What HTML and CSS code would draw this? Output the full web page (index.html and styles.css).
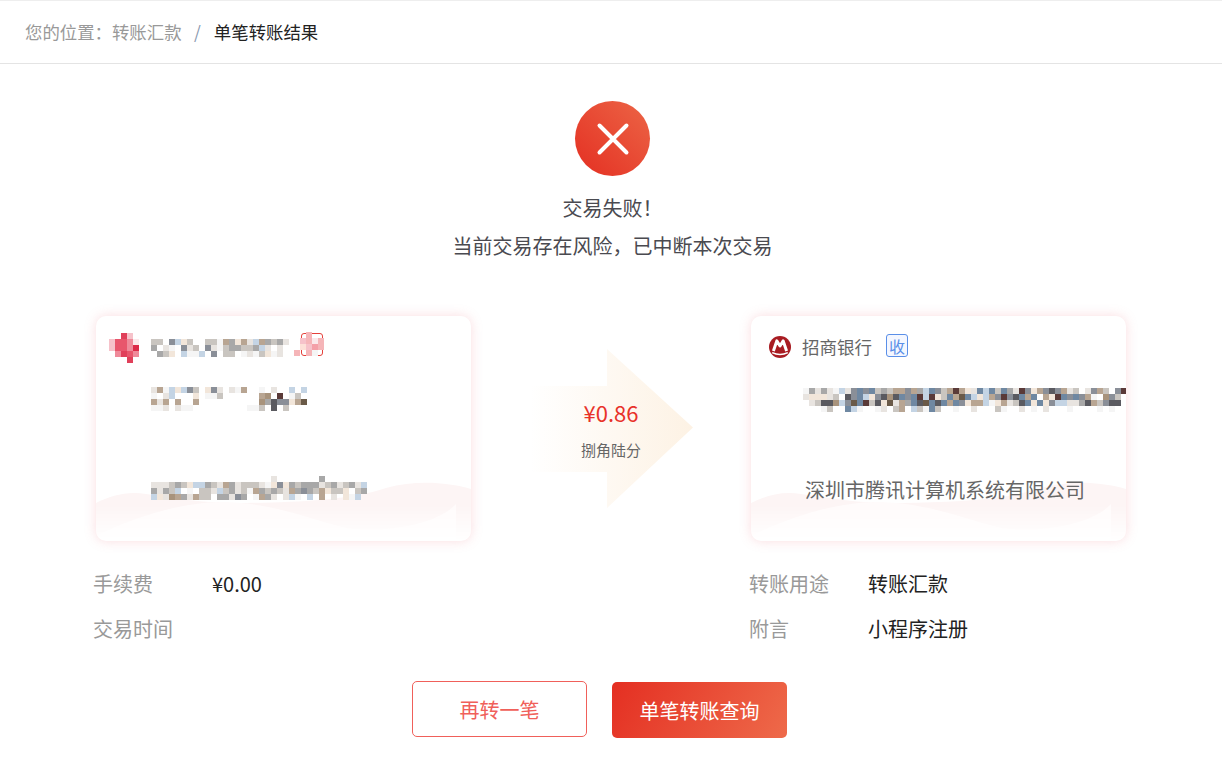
FILE: index.html
```html
<!DOCTYPE html>
<html lang="zh-CN">
<head>
    <meta charset="UTF-8">
    <meta name="viewport" content="width=device-width, initial-scale=1.0">
    <title>单笔转账结果</title>
    <link rel="stylesheet" href="styles.css">
</head>
<body>
    <div class="breadcrumb">
        <span class="crumb-link">您的位置&#xFF1A;转账汇款</span>
        <span class="crumb-sep">/</span>
        <span class="crumb-now">单笔转账结果</span>
    </div>

    <div class="result">
        <div class="result-icon">
            <svg width="34" height="34" viewBox="0 0 34 34">
                <path d="M3.5 3.5 L30.5 30.5 M30.5 3.5 L3.5 30.5" stroke="#fff" stroke-width="4" stroke-linecap="round" fill="none"/>
            </svg>
        </div>
        <p class="result-text">交易失败&#xFF01;</p>
        <p class="result-text">当前交易存在风险&#xFF0C;已中断本次交易</p>
    </div>

    <div class="transfer">
        <div class="card">
            <svg class="card-wave" viewBox="0 0 375 65" preserveAspectRatio="none">
                <path d="M0 27 C15 20 30 15 50 18 C80 22 110 28 150 27 C200 26 250 25 290 12 C320 4 350 6 375 13 L375 65 L0 65 Z" fill="#fdf5f5"/>
                <path d="M0 60 C40 40 90 25 130 26 C180 28 210 42 250 52 C300 58 345 45 360 28 L360 65 L0 65 Z" fill="#fffbfb"/>
            </svg>
            <div class="card-head">
                <canvas class="mosaic mosaic-logo" data-rows="..rs. sttuw sttuv .urtu ...r."></canvas>
                <canvas class="mosaic mosaic-name" data-rows="bb.dfgb..bbihcghafhcbca c.ai.dab.daibccbbcfa.a. .cbg.fiif.d.bb.iaibgia."></canvas>
                <span class="tag tag-pay"><canvas class="mosaic mosaic-tag" data-rows="..x.. .sxwx .yszx x.xi."></canvas></span>
            </div>
            <canvas class="mosaic mosaic-account" data-rows="ahifgfdb.gda.aih..i.a..f.f i.af...g.iib......ho.k.ib. hah.h..h..........oceddghl iia.aii.........iib.e.b..."></canvas>
            <canvas class="mosaic mosaic-owner" data-rows="....................a.......c....... aaabcbgffcbahcabbbaigdgcbcccabcabcaf cacbf.i.bbafbcabihcbcbahcdcbhgbbg.bc fgaohcahbb.ccadc.ihca.afi.f.h.a.gif."></canvas>
        </div>

        <div class="amount">
            <div class="amount-arrow"></div>
            <div class="amount-num">¥0.86</div>
            <div class="amount-cn">捌角陆分</div>
        </div>

        <div class="card">
            <svg class="card-wave" viewBox="0 0 375 65" preserveAspectRatio="none">
                <path d="M0 27 C15 20 30 15 50 18 C80 22 110 28 150 27 C200 26 250 25 290 12 C320 4 350 6 375 13 L375 65 L0 65 Z" fill="#fdf5f5"/>
                <path d="M0 60 C40 40 90 25 130 26 C180 28 210 42 250 52 C300 58 345 45 360 28 L360 65 L0 65 Z" fill="#fffbfb"/>
            </svg>
            <div class="card-head card-head-bank">
                <svg class="bank-logo" width="22" height="22" viewBox="0 0 22 22">
                    <circle cx="11" cy="11" r="11" fill="#a81c22"/>
                    <path d="M4.4 15 L7.8 4.9 L11 10 L14.2 4.9 L17.6 15" stroke="#fff" stroke-width="3" stroke-linejoin="round" fill="none"/>
                    <path d="M3.2 16.6 Q11 20.4 18.8 16.6" stroke="#fff" stroke-width="1.6" fill="none"/>
                </svg>
                <span class="bank-name">招商银行</span>
                <span class="tag tag-get">收</span>
            </div>
            <canvas class="mosaic mosaic-card-no" data-rows="icacaifadjdjbcbhhdhcfjdbhkhgajfjbjcakdghdedhab.adhb.dk agggab.edjfgdeoejdjkfkgbjhljfgfhdkdejhj.hgkjdjdhi.odb.eg .abeeofdljkbeglahcjeljejhjdghhfighabejgjgdffaacehbdee ...ib..jfi..ia.bh.fbijb..i..a...bi..a.i.a...i....i.i."></canvas>
            <div class="card-owner">深圳市腾讯计算机系统有限公司</div>
        </div>
    </div>

    <div class="details">
        <div>
            <div class="detail-row"><span class="detail-label">手续费</span><span class="detail-value">¥0.00</span></div>
            <div class="detail-row"><span class="detail-label">交易时间</span></div>
        </div>
        <div>
            <div class="detail-row"><span class="detail-label">转账用途</span><span class="detail-value">转账汇款</span></div>
            <div class="detail-row"><span class="detail-label">附言</span><span class="detail-value">小程序注册</span></div>
        </div>
    </div>

    <div class="actions">
        <button class="btn btn-outline">再转一笔</button>
        <button class="btn btn-fill">单笔转账查询</button>
    </div>

    <script src="script.js"></script>
</body>
</html>
```

FILE: styles.css
```css
* {
    margin: 0;
    padding: 0;
    box-sizing: border-box;
    font-family: "Noto Sans CJK SC", "Noto Sans", sans-serif;
}

body {
    background: #fff;
    color: #222;
}

.breadcrumb {
    display: flex;
    align-items: center;
    height: 64px;
    padding: 0 0 2px 25px;
    border-top: 1px solid #eee;
    border-bottom: 1px solid #e4e4e4;
    font-size: 17.4px;
}

.crumb-link {
    color: #999;
}

.crumb-sep {
    margin: 0 13px 0 12.5px;
    color: #8a9ab0;
}

.crumb-now {
    color: #222;
}

.result {
    display: flex;
    flex-direction: column;
    align-items: center;
    padding: 37px 0 0 3px;
}

.result-icon {
    display: flex;
    align-items: center;
    justify-content: center;
    width: 75px;
    height: 75px;
    margin-bottom: 13px;
    border-radius: 50%;
    background: linear-gradient(45deg, #e42f22, #ec6546);
}

.result-text {
    font-size: 20px;
    line-height: 38px;
    color: #4a4a50;
}

.transfer {
    display: flex;
    justify-content: space-between;
    margin-top: 51px;
    padding: 0 96px;
}

.card {
    position: relative;
    display: flex;
    flex-direction: column;
    align-items: flex-start;
    width: 375px;
    height: 225px;
    overflow: hidden;
    background: #fff;
    border-radius: 10px;
    box-shadow: 0 0 12px rgba(240, 120, 130, 0.25);
}

.card-wave {
    position: absolute;
    left: 0;
    bottom: 0;
    width: 100%;
    height: 65px;
    mask-image: linear-gradient(#000 45%, transparent 100%);
}

.card-head {
    position: relative;
    display: flex;
    align-items: flex-start;
    height: 47px;
    padding: 17px 0 0 13px;
}

.card-head-bank {
    align-items: center;
    padding: 18px 0 0 18px;
    height: 44px;
    font-size: 17.5px;
}

.mosaic {
    display: block;
    position: relative;
    flex-shrink: 0;
}

.mosaic-name {
    margin: 6px 0 0 12px;
}

.tag {
    display: flex;
    align-items: center;
    justify-content: center;
    position: relative;
    width: 22px;
    height: 23px;
    border-radius: 3px;
}

.tag-pay {
    margin-left: 12px;
    border: 1px solid #e5403a;
}

.mosaic-tag {
    position: absolute;
    left: -8px;
    top: -2px;
}

.bank-logo {
    flex-shrink: 0;
}

.bank-name {
    margin: 0 0 2px 11px;
    color: #666;
}

.tag-get {
    margin: 0 0 3px 14px;
    border: 1px solid #5a8fe8;
    background: #f4f7ff;
    color: #5a8fe8;
    font-size: 16px;
}

.mosaic-account {
    margin: 24px 0 0 55px;
}

.mosaic-owner {
    margin: 65px 0 0 55px;
}

.mosaic-card-no {
    margin: 28px 0 0 52px;
}

.card-owner {
    position: relative;
    margin: 63px 0 0 54px;
    font-size: 20px;
    line-height: 30px;
    color: #666;
}

.amount {
    position: relative;
    display: flex;
    flex-direction: column;
    align-items: center;
    width: 280px;
    padding-top: 78px;
}

.amount-arrow {
    position: absolute;
    left: 59px;
    top: 33px;
    width: 163px;
    height: 159px;
    background: linear-gradient(90deg, rgba(253, 243, 230, 0), #fdf2e4);
    clip-path: polygon(0 37px, 77px 37px, 77px 0, 100% 78.5px, 77px 100%, 77px 123px, 0 123px);
}

.amount-num {
    position: relative;
    font-size: 22px;
    line-height: 36px;
    color: #e8322a;
}

.amount-cn {
    position: relative;
    margin-top: 9px;
    font-size: 15px;
    line-height: 22px;
    color: #666;
}

.details {
    display: grid;
    grid-template-columns: 656px 1fr;
    margin-top: 20px;
    padding-left: 93px;
}

.detail-row {
    display: flex;
    align-items: center;
    height: 45px;
    font-size: 20px;
}

.detail-label {
    width: 119px;
    color: #999;
}

.detail-value {
    color: #222;
}

.actions {
    display: flex;
    justify-content: center;
    gap: 25px;
    margin-top: 30px;
    padding-right: 23px;
}

.btn {
    width: 175px;
    height: 56px;
    border-radius: 5px;
    font-size: 20px;
    cursor: pointer;
}

.btn-outline {
    background: #fff;
    border: 1px solid #f0605a;
    color: #f0605a;
}

.btn-fill {
    margin-top: 1px;
    border: none;
    background: linear-gradient(120deg, #e42f22, #ee6a4a);
    color: #fff;
}
```

FILE: script.js
```js
// redacted blocks on the cards: each letter is one 6px square
const palette = {
    a: '#e8e4e0', b: '#c9c5c0', c: '#a8a8a8', d: '#8a8f98', e: '#5a5a60', f: '#c4d4e4',
    g: '#f2e6da', h: '#b8a592', i: '#f5f5f5', j: '#6f88a2', k: '#5a3a38', l: '#6a5a48',
    o: '#a8937c', r: '#e0405a', s: '#f6c2ca', t: '#e8566c', u: '#ef8a9a', v: '#dc2a48',
    w: '#fbe8ea', x: '#f5b5b8', y: '#fde0d8', z: '#f4a0a8'
};

document.querySelectorAll('.mosaic').forEach(canvas => {
    const rows = canvas.dataset.rows.split(' ');
    canvas.width = Math.max(...rows.map(row => row.length)) * 6;
    canvas.height = rows.length * 6;
    const ctx = canvas.getContext('2d');
    rows.forEach((row, y) => {
        [...row].forEach((cell, x) => {
            if (palette[cell]) {
                ctx.fillStyle = palette[cell];
                ctx.fillRect(x * 6, y * 6, 6, 6);
            }
        });
    });
});
```
